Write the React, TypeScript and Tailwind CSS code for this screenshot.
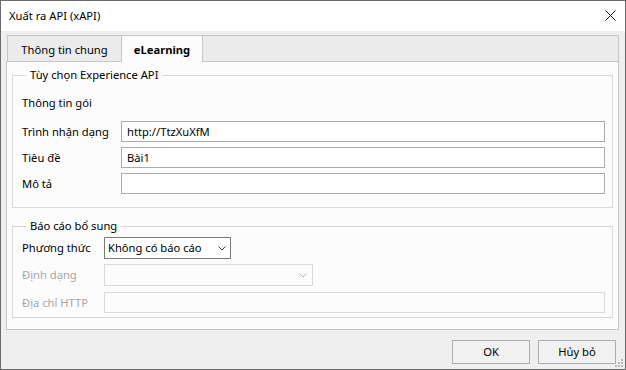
import React from "react";

function Chevron({ color }: { color: string }) {
  return (
    <svg width="8" height="5" viewBox="0 0 8 5" className="shrink-0">
      <path d="M0.5 0.5 L4 4 L7.5 0.5" fill="none" stroke={color} strokeWidth="1" />
    </svg>
  );
}

function Row({ label, children, labelW, disabled }: { label: string; children: React.ReactNode; labelW: string; disabled?: boolean }) {
  return (
    <div className="flex items-center">
      <div className={`${labelW} shrink-0 ${disabled ? "text-[#a6a6a6]" : "text-black"}`}>{label}</div>
      {children}
    </div>
  );
}

export default function App() {
  return (
    <div className="relative w-[626px] h-[370px] border border-[#6b6b6b] bg-[#efefef] flex flex-col text-[11.2px] leading-[16px] text-black font-['Noto_Sans',sans-serif]">
      {/* Title bar */}
      <div className="h-[30px] bg-white flex items-center justify-between pl-[8px] pr-[9px] shrink-0">
        <span className="text-[#000]">Xuất ra API (xAPI)</span>
        <svg width="11" height="11" viewBox="0 0 11 11" className="mb-[2px]">
          <path d="M0.5 0.5 L10.5 10.5 M10.5 0.5 L0.5 10.5" stroke="#111" strokeWidth="1" fill="none" />
        </svg>
      </div>

      {/* Tab control */}
      <div className="mt-[4px] ml-[5px] w-[613px] flex flex-col">
        <div className="h-[26px] flex items-start">
          <div className="ml-[1px] w-[114px] h-[26px] border-l border-t border-[#c6c6c6] bg-[#ebebeb] flex items-center justify-center pt-[3px]">
            Thông tin chung
          </div>
          <div className="relative z-10 w-[82px] h-[27px] border-l border-t border-r border-[#c6c6c6] bg-[#fcfcfc] flex items-center justify-center pt-[2px] font-bold">
            eLearning
          </div>
          <div className="flex-1 h-[26px] border-t border-r border-[#c6c6c6] bg-[#ebebeb]" />
        </div>

        <div className="h-[269px] border border-[#c6c6c6] bg-[#fcfcfc] pt-[5px] px-[5px]">
          <fieldset className="border border-[#d8d8d8] pl-[9px] pr-[7px] pb-[13px]">
            <legend className="ml-[4px] px-[4px] leading-[16px]">Tùy chọn Experience API</legend>
            <div className="mt-[12px] h-[16px]">Thông tin gói</div>
            <div className="mt-[10px] flex flex-col gap-[5px]">
              <Row label="Trình nhận dạng" labelW="w-[99px]">
                <div className="flex-1 h-[21px] border border-[#ababab] bg-white flex items-center pl-[5px]">http://TtzXuXfM</div>
              </Row>
              <Row label="Tiêu đề" labelW="w-[99px]">
                <div className="flex-1 h-[21px] border border-[#ababab] bg-white flex items-center pl-[5px]">Bài1</div>
              </Row>
              <Row label="Mô tả" labelW="w-[99px]">
                <div className="flex-1 h-[21px] border border-[#ababab] bg-white" />
              </Row>
            </div>
          </fieldset>

          <fieldset className="mt-[10px] border border-[#d8d8d8] pl-[9px] pr-[7px] pb-[4px]">
            <legend className="ml-[4px] px-[4px] leading-[16px]">Báo cáo bổ sung</legend>
            <div className="mt-[3px]">
              <Row label="Phương thức" labelW="w-[82px]">
                <div className="w-[127px] h-[22px] border border-[#7a7a7a] bg-white flex items-center justify-between pl-[3px] pr-[4px]">
                  <span>Không có báo cáo</span>
                  <Chevron color="#444" />
                </div>
              </Row>
            </div>
            <div className="mt-[5px]">
              <Row label="Định dạng" labelW="w-[82px]" disabled>
                <div className="w-[209px] h-[22px] border border-[#d9d9d9] bg-[#fcfcfc] flex items-center justify-end pr-[5px]">
                  <Chevron color="#b5b5b5" />
                </div>
              </Row>
            </div>
            <div className="mt-[6px]">
              <Row label="Địa chỉ HTTP" labelW="w-[82px]" disabled>
                <div className="flex-1 h-[21px] border border-[#d9d9d9] bg-[#fcfcfc]" />
              </Row>
            </div>
          </fieldset>
        </div>
      </div>

      {/* Buttons */}
      <div className="mt-[10px] flex justify-end gap-[8px] pr-[9px]">
        <div className="w-[78px] h-[24px] border border-[#adadad] bg-[#f1f1f1] flex items-center justify-center">OK</div>
        <div className="w-[78px] h-[24px] border border-[#adadad] bg-[#f1f1f1] flex items-center justify-center">Hủy bỏ</div>
      </div>

      {/* Resize grip */}
      <svg width="9" height="9" viewBox="0 0 9 9" className="absolute right-[1px] bottom-[1px]">
        <rect x="6" y="0" width="2" height="2" fill="#b8b8b8" />
        <rect x="3" y="3" width="2" height="2" fill="#b8b8b8" />
        <rect x="6" y="3" width="2" height="2" fill="#b8b8b8" />
        <rect x="0" y="6" width="2" height="2" fill="#b8b8b8" />
        <rect x="3" y="6" width="2" height="2" fill="#b8b8b8" />
        <rect x="6" y="6" width="2" height="2" fill="#b8b8b8" />
      </svg>
    </div>
  );
}
